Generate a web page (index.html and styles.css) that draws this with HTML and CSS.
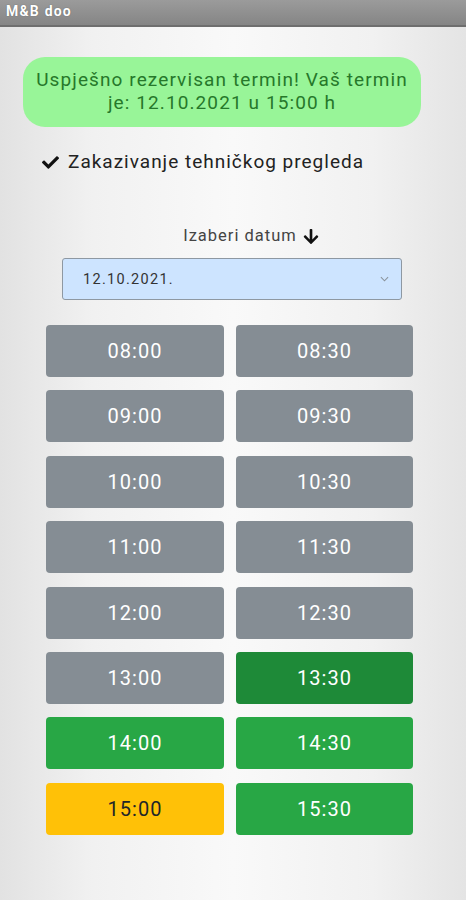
FILE: index.html
```html
<!DOCTYPE html>
<html lang="sr">
<head>
<meta charset="utf-8">
<title>M&amp;B doo</title>
<link rel="stylesheet" href="styles.css">
</head>
<body>
<header class="titlebar">M&amp;B doo</header>
<main class="page">
  <div class="alert">Uspješno rezervisan termin! Vaš termin je: 12.10.2021 u 15:00 h</div>
  <div class="service">
    <svg class="check" viewBox="0 0 512 512" width="17" height="17"><path d="M173.9 439.4l-166.4-166.4c-10-10-10-26.2 0-36.2l36.2-36.2c10-10 26.2-10 36.2 0L192 312.7 432.1 72.6c10-10 26.2-10 36.2 0l36.2 36.2c10 10 10 26.2 0 36.2l-294.4 294.4c-10 10-26.2 10-36.2 0z" fill="#111"/></svg>
    <span>Zakazivanje tehničkog pregleda</span>
  </div>
  <div class="pick">
    <span>Izaberi datum</span>
    <svg class="arrow" viewBox="0 0 448 512" width="16" height="17"><path d="M413.1 222.5l22.2 22.2c9.4 9.4 9.4 24.6 0 33.9L241 473c-9.4 9.4-24.6 9.4-33.9 0L12.7 278.6c-9.4-9.4-9.4-24.6 0-33.9l22.2-22.2c9.5-9.5 25-9.300 34.3.4L184 343.4V56c0-13.3 10.7-24 24-24h32c13.3 0 24 10.7 24 24v287.4l114.8-120.5c9.3-9.8 24.8-10 34.3-.4z" fill="#111"/></svg>
  </div>
  <div class="select">
    <span>12.10.2021.</span>
    <svg class="chev" viewBox="0 0 10 6" width="9" height="6"><path d="M1 1l4 4 4-4" fill="none" stroke="#8a939c" stroke-width="1.2"/></svg>
  </div>
  <div class="slots">
    <div class="slot gray">08:00</div>
    <div class="slot gray">08:30</div>
    <div class="slot gray">09:00</div>
    <div class="slot gray">09:30</div>
    <div class="slot gray">10:00</div>
    <div class="slot gray">10:30</div>
    <div class="slot gray">11:00</div>
    <div class="slot gray">11:30</div>
    <div class="slot gray">12:00</div>
    <div class="slot gray">12:30</div>
    <div class="slot gray">13:00</div>
    <div class="slot dark">13:30</div>
    <div class="slot green">14:00</div>
    <div class="slot green">14:30</div>
    <div class="slot yellow">15:00</div>
    <div class="slot green">15:30</div>
  </div>
</main>
</body>
</html>
```
FILE: styles.css
```css
html, body {
  margin: 0;
  padding: 0;
}
body {
  width: 466px;
  min-height: 900px;
  font-family: Roboto, "Noto Sans", "Liberation Sans", sans-serif;
  background: linear-gradient(90deg, #e2e2e2 0%, #f1f1f1 20%, #f9f9f9 50%, #f1f1f1 80%, #e4e4e4 100%);
  color: #222;
}
.titlebar {
  height: 27px;
  background: linear-gradient(#9b9b9b, #858585);
  border-bottom: 2px solid #6e6e6e;
  color: #fff;
  font-weight: bold;
  font-size: 14px;
  letter-spacing: 1.2px;
  line-height: 23px;
  padding-left: 6px;
  text-shadow: 0 0 1px #555;
  box-sizing: border-box;
}
.page {
  display: flex;
  flex-direction: column;
}
.alert {
  margin: 30px 0 0 23px;
  width: 398px;
  height: 70px;
  box-sizing: border-box;
  padding: 11px 8px;
  background: #98f598;
  border-radius: 22px;
  color: #26782a;
  font-size: 19px;
  letter-spacing: 1.1px;
  line-height: 23px;
  text-align: center;
}
.service {
  margin: 23px 0 0 42px;
  display: flex;
  align-items: center;
  gap: 9px;
  font-size: 19px;
  letter-spacing: 1px;
  color: #222;
  line-height: 24px;
}
.pick {
  margin-top: 52px;
  display: flex;
  justify-content: center;
  align-items: center;
  gap: 6px;
  font-size: 16.5px;
  letter-spacing: 1px;
  color: #444;
  line-height: 20px;
  padding-left: 36px;
}
.select {
  margin: 12px 0 0 62px;
  width: 340px;
  height: 42px;
  box-sizing: border-box;
  background: #cde4ff;
  border: 1px solid #8e98a2;
  border-radius: 3px;
  display: flex;
  align-items: center;
  justify-content: space-between;
  padding: 0 12px 0 20px;
  font-size: 14.5px;
  letter-spacing: 1.3px;
  color: #333;
}
.slots {
  margin: 25px 0 0 46px;
  width: 367px;
  display: grid;
  grid-template-columns: 178px 177px;
  column-gap: 12px;
  row-gap: 13.4px;
}
.slot {
  height: 52px;
  border-radius: 4px;
  display: flex;
  align-items: center;
  justify-content: center;
  font-size: 20px;
  letter-spacing: 1px;
  color: #fff;
}
.gray { background: #858d94; }
.green { background: #28a745; }
.dark { background: #1e8a38; }
.yellow { background: #ffc107; color: #212529; }
```
